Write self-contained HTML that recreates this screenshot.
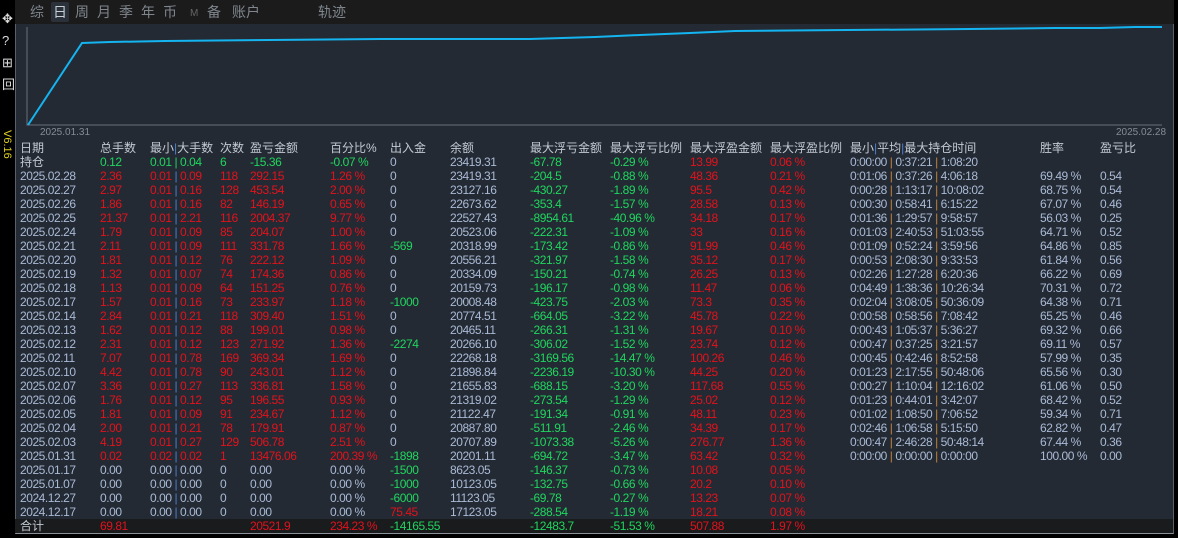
<!DOCTYPE html>
<html><head><meta charset="utf-8"><style>
*{margin:0;padding:0;box-sizing:border-box}
body{width:1178px;height:538px;background:#000;position:relative;overflow:hidden;font-family:"Liberation Sans","Noto Sans CJK SC",sans-serif;font-size:12px;color:#a9bad6}
#top{position:absolute;left:15px;top:0;width:1159px;height:24px;background:#1b1b1b}
#top span{position:absolute;top:4px;font-size:14px;color:#7f868e;line-height:16px}
#panel{position:absolute;left:15px;top:24px;width:1159px;height:510px;background:#242a33;border-left:1px solid #5a6068;border-right:1px solid #5a6068;border-bottom:1px solid #8a9098}
.row{position:absolute;left:0;height:14px;line-height:14px;white-space:nowrap;letter-spacing:-0.45px}
.row span{position:absolute;top:0}
.h{color:#c3cad4;font-size:12px;letter-spacing:0}
.r{color:#e3121c}.g{color:#1fd65f}
i{font-style:normal;color:#4a7fd0}
u{text-decoration:none;color:#c08040}
#tot{position:absolute;left:15px;top:519px;width:1158px;height:14px;background:#1a1b1d}
</style></head><body>
<div id="top">
<span style="left:15px">综</span>
<span style="left:36px;top:2px;width:18px;height:20px;background:#2a313a;border-radius:2px;color:#c8cdd3;padding:2px 2px">日</span>
<span style="left:60px">周</span><span style="left:82px">月</span><span style="left:104px">季</span><span style="left:126px">年</span><span style="left:148px">币</span><span style="left:175px;font-size:10px;top:6px;color:#666">M</span><span style="left:192px">备</span><span style="left:217px">账户</span><span style="left:303px">轨迹</span>
</div>
<div style="position:absolute;left:2px;top:8px;color:#ddd;font-size:13px;line-height:22px;width:12px">✥<br>?<br>⊞<br>回</div>
<div style="position:absolute;top:130px;color:#e0d020;font-size:11px;transform:rotate(90deg);transform-origin:left top;left:13px">V6.16</div>
<div id="panel"></div>
<svg style="position:absolute;left:0;top:0" width="1178" height="140">
<polyline points="27,27 27,125 1162,125" fill="none" stroke="#6a7078" stroke-width="1"/>
<polyline points="28,125 82,43 110,42 165,41 270,40 380,39 530,39 595,37 640,35 690,33 735,31 970,29 1055,28 1100,28 1135,27 1162,27" fill="none" stroke="#14b4f0" stroke-width="2"/>
<text x="40" y="135" fill="#858c95" font-size="10" font-family="Liberation Sans">2025.01.31</text>
<text x="1116" y="135" fill="#858c95" font-size="10" font-family="Liberation Sans">2025.02.28</text>
</svg>
<div id="tot"></div>
<div style="position:absolute;left:0;top:0">
<div class="row h" style="top:141px"><span style="left:20px">日期</span><span style="left:100px">总手数</span><span style="left:150px">最小<i>|</i>大手数</span><span style="left:220px">次数</span><span style="left:250px">盈亏金额</span><span style="left:330px">百分比%</span><span style="left:390px">出入金</span><span style="left:450px">余额</span><span style="left:530px">最大浮亏金额</span><span style="left:610px">最大浮亏比例</span><span style="left:690px">最大浮盈金额</span><span style="left:770px">最大浮盈比例</span><span style="left:850px">最小<i>|</i>平均<i>|</i>最大持仓时间</span><span style="left:1040px">胜率</span><span style="left:1100px">盈亏比</span></div>

<div class="row" style="top:155px"><span class="h" style="left:20px">持仓</span><span class="g" style="left:100px">0.12</span><span class="g" style="left:150px">0.01 | 0.04</span><span class="g" style="left:220px">6</span><span class="g" style="left:250px">-15.36</span><span class="g" style="left:330px">-0.07 %</span><span style="left:390px">0</span><span style="left:450px">23419.31</span><span class="g" style="left:530px">-67.78</span><span class="g" style="left:610px">-0.29 %</span><span class="r" style="left:690px">13.99</span><span class="r" style="left:770px">0.06 %</span><span style="left:850px">0:00:00 <u>|</u> 0:37:21 <u>|</u> 1:08:20</span></div>

<div class="row" style="top:169px"><span style="left:20px">2025.02.28</span><span class="r" style="left:100px">2.36</span><span class="r" style="left:150px">0.01 <i>|</i> 0.09</span><span class="r" style="left:220px">118</span><span class="r" style="left:250px">292.15</span><span class="r" style="left:330px">1.26 %</span><span style="left:390px">0</span><span style="left:450px">23419.31</span><span class="g" style="left:530px">-204.5</span><span class="g" style="left:610px">-0.88 %</span><span class="r" style="left:690px">48.36</span><span class="r" style="left:770px">0.21 %</span><span style="left:850px">0:01:06 <u>|</u> 0:37:26 <u>|</u> 4:06:18</span><span style="left:1040px">69.49 %</span><span style="left:1100px">0.54</span></div>

<div class="row" style="top:183px"><span style="left:20px">2025.02.27</span><span class="r" style="left:100px">2.97</span><span class="r" style="left:150px">0.01 <i>|</i> 0.16</span><span class="r" style="left:220px">128</span><span class="r" style="left:250px">453.54</span><span class="r" style="left:330px">2.00 %</span><span style="left:390px">0</span><span style="left:450px">23127.16</span><span class="g" style="left:530px">-430.27</span><span class="g" style="left:610px">-1.89 %</span><span class="r" style="left:690px">95.5</span><span class="r" style="left:770px">0.42 %</span><span style="left:850px">0:00:28 <u>|</u> 1:13:17 <u>|</u> 10:08:02</span><span style="left:1040px">68.75 %</span><span style="left:1100px">0.54</span></div>

<div class="row" style="top:197px"><span style="left:20px">2025.02.26</span><span class="r" style="left:100px">1.86</span><span class="r" style="left:150px">0.01 <i>|</i> 0.16</span><span class="r" style="left:220px">82</span><span class="r" style="left:250px">146.19</span><span class="r" style="left:330px">0.65 %</span><span style="left:390px">0</span><span style="left:450px">22673.62</span><span class="g" style="left:530px">-353.4</span><span class="g" style="left:610px">-1.57 %</span><span class="r" style="left:690px">28.58</span><span class="r" style="left:770px">0.13 %</span><span style="left:850px">0:00:30 <u>|</u> 0:58:41 <u>|</u> 6:15:22</span><span style="left:1040px">67.07 %</span><span style="left:1100px">0.46</span></div>

<div class="row" style="top:211px"><span style="left:20px">2025.02.25</span><span class="r" style="left:100px">21.37</span><span class="r" style="left:150px">0.01 <i>|</i> 2.21</span><span class="r" style="left:220px">116</span><span class="r" style="left:250px">2004.37</span><span class="r" style="left:330px">9.77 %</span><span style="left:390px">0</span><span style="left:450px">22527.43</span><span class="g" style="left:530px">-8954.61</span><span class="g" style="left:610px">-40.96 %</span><span class="r" style="left:690px">34.18</span><span class="r" style="left:770px">0.17 %</span><span style="left:850px">0:01:36 <u>|</u> 1:29:57 <u>|</u> 9:58:57</span><span style="left:1040px">56.03 %</span><span style="left:1100px">0.25</span></div>

<div class="row" style="top:225px"><span style="left:20px">2025.02.24</span><span class="r" style="left:100px">1.79</span><span class="r" style="left:150px">0.01 <i>|</i> 0.09</span><span class="r" style="left:220px">85</span><span class="r" style="left:250px">204.07</span><span class="r" style="left:330px">1.00 %</span><span style="left:390px">0</span><span style="left:450px">20523.06</span><span class="g" style="left:530px">-222.31</span><span class="g" style="left:610px">-1.09 %</span><span class="r" style="left:690px">33</span><span class="r" style="left:770px">0.16 %</span><span style="left:850px">0:01:03 <u>|</u> 2:40:53 <u>|</u> 51:03:55</span><span style="left:1040px">64.71 %</span><span style="left:1100px">0.52</span></div>

<div class="row" style="top:239px"><span style="left:20px">2025.02.21</span><span class="r" style="left:100px">2.11</span><span class="r" style="left:150px">0.01 <i>|</i> 0.09</span><span class="r" style="left:220px">111</span><span class="r" style="left:250px">331.78</span><span class="r" style="left:330px">1.66 %</span><span class="g" style="left:390px">-569</span><span style="left:450px">20318.99</span><span class="g" style="left:530px">-173.42</span><span class="g" style="left:610px">-0.86 %</span><span class="r" style="left:690px">91.99</span><span class="r" style="left:770px">0.46 %</span><span style="left:850px">0:01:09 <u>|</u> 0:52:24 <u>|</u> 3:59:56</span><span style="left:1040px">64.86 %</span><span style="left:1100px">0.85</span></div>

<div class="row" style="top:253px"><span style="left:20px">2025.02.20</span><span class="r" style="left:100px">1.81</span><span class="r" style="left:150px">0.01 <i>|</i> 0.12</span><span class="r" style="left:220px">76</span><span class="r" style="left:250px">222.12</span><span class="r" style="left:330px">1.09 %</span><span style="left:390px">0</span><span style="left:450px">20556.21</span><span class="g" style="left:530px">-321.97</span><span class="g" style="left:610px">-1.58 %</span><span class="r" style="left:690px">35.12</span><span class="r" style="left:770px">0.17 %</span><span style="left:850px">0:00:53 <u>|</u> 2:08:30 <u>|</u> 9:33:53</span><span style="left:1040px">61.84 %</span><span style="left:1100px">0.56</span></div>

<div class="row" style="top:267px"><span style="left:20px">2025.02.19</span><span class="r" style="left:100px">1.32</span><span class="r" style="left:150px">0.01 <i>|</i> 0.07</span><span class="r" style="left:220px">74</span><span class="r" style="left:250px">174.36</span><span class="r" style="left:330px">0.86 %</span><span style="left:390px">0</span><span style="left:450px">20334.09</span><span class="g" style="left:530px">-150.21</span><span class="g" style="left:610px">-0.74 %</span><span class="r" style="left:690px">26.25</span><span class="r" style="left:770px">0.13 %</span><span style="left:850px">0:02:26 <u>|</u> 1:27:28 <u>|</u> 6:20:36</span><span style="left:1040px">66.22 %</span><span style="left:1100px">0.69</span></div>

<div class="row" style="top:281px"><span style="left:20px">2025.02.18</span><span class="r" style="left:100px">1.13</span><span class="r" style="left:150px">0.01 <i>|</i> 0.09</span><span class="r" style="left:220px">64</span><span class="r" style="left:250px">151.25</span><span class="r" style="left:330px">0.76 %</span><span style="left:390px">0</span><span style="left:450px">20159.73</span><span class="g" style="left:530px">-196.17</span><span class="g" style="left:610px">-0.98 %</span><span class="r" style="left:690px">11.47</span><span class="r" style="left:770px">0.06 %</span><span style="left:850px">0:04:49 <u>|</u> 1:38:36 <u>|</u> 10:26:34</span><span style="left:1040px">70.31 %</span><span style="left:1100px">0.72</span></div>

<div class="row" style="top:295px"><span style="left:20px">2025.02.17</span><span class="r" style="left:100px">1.57</span><span class="r" style="left:150px">0.01 <i>|</i> 0.16</span><span class="r" style="left:220px">73</span><span class="r" style="left:250px">233.97</span><span class="r" style="left:330px">1.18 %</span><span class="g" style="left:390px">-1000</span><span style="left:450px">20008.48</span><span class="g" style="left:530px">-423.75</span><span class="g" style="left:610px">-2.03 %</span><span class="r" style="left:690px">73.3</span><span class="r" style="left:770px">0.35 %</span><span style="left:850px">0:02:04 <u>|</u> 3:08:05 <u>|</u> 50:36:09</span><span style="left:1040px">64.38 %</span><span style="left:1100px">0.71</span></div>

<div class="row" style="top:309px"><span style="left:20px">2025.02.14</span><span class="r" style="left:100px">2.84</span><span class="r" style="left:150px">0.01 <i>|</i> 0.21</span><span class="r" style="left:220px">118</span><span class="r" style="left:250px">309.40</span><span class="r" style="left:330px">1.51 %</span><span style="left:390px">0</span><span style="left:450px">20774.51</span><span class="g" style="left:530px">-664.05</span><span class="g" style="left:610px">-3.22 %</span><span class="r" style="left:690px">45.78</span><span class="r" style="left:770px">0.22 %</span><span style="left:850px">0:00:58 <u>|</u> 0:58:56 <u>|</u> 7:08:42</span><span style="left:1040px">65.25 %</span><span style="left:1100px">0.46</span></div>

<div class="row" style="top:323px"><span style="left:20px">2025.02.13</span><span class="r" style="left:100px">1.62</span><span class="r" style="left:150px">0.01 <i>|</i> 0.12</span><span class="r" style="left:220px">88</span><span class="r" style="left:250px">199.01</span><span class="r" style="left:330px">0.98 %</span><span style="left:390px">0</span><span style="left:450px">20465.11</span><span class="g" style="left:530px">-266.31</span><span class="g" style="left:610px">-1.31 %</span><span class="r" style="left:690px">19.67</span><span class="r" style="left:770px">0.10 %</span><span style="left:850px">0:00:43 <u>|</u> 1:05:37 <u>|</u> 5:36:27</span><span style="left:1040px">69.32 %</span><span style="left:1100px">0.66</span></div>

<div class="row" style="top:337px"><span style="left:20px">2025.02.12</span><span class="r" style="left:100px">2.31</span><span class="r" style="left:150px">0.01 <i>|</i> 0.12</span><span class="r" style="left:220px">123</span><span class="r" style="left:250px">271.92</span><span class="r" style="left:330px">1.36 %</span><span class="g" style="left:390px">-2274</span><span style="left:450px">20266.10</span><span class="g" style="left:530px">-306.02</span><span class="g" style="left:610px">-1.52 %</span><span class="r" style="left:690px">23.74</span><span class="r" style="left:770px">0.12 %</span><span style="left:850px">0:00:47 <u>|</u> 0:37:25 <u>|</u> 3:21:57</span><span style="left:1040px">69.11 %</span><span style="left:1100px">0.57</span></div>

<div class="row" style="top:351px"><span style="left:20px">2025.02.11</span><span class="r" style="left:100px">7.07</span><span class="r" style="left:150px">0.01 <i>|</i> 0.78</span><span class="r" style="left:220px">169</span><span class="r" style="left:250px">369.34</span><span class="r" style="left:330px">1.69 %</span><span style="left:390px">0</span><span style="left:450px">22268.18</span><span class="g" style="left:530px">-3169.56</span><span class="g" style="left:610px">-14.47 %</span><span class="r" style="left:690px">100.26</span><span class="r" style="left:770px">0.46 %</span><span style="left:850px">0:00:45 <u>|</u> 0:42:46 <u>|</u> 8:52:58</span><span style="left:1040px">57.99 %</span><span style="left:1100px">0.35</span></div>

<div class="row" style="top:365px"><span style="left:20px">2025.02.10</span><span class="r" style="left:100px">4.42</span><span class="r" style="left:150px">0.01 <i>|</i> 0.78</span><span class="r" style="left:220px">90</span><span class="r" style="left:250px">243.01</span><span class="r" style="left:330px">1.12 %</span><span style="left:390px">0</span><span style="left:450px">21898.84</span><span class="g" style="left:530px">-2236.19</span><span class="g" style="left:610px">-10.30 %</span><span class="r" style="left:690px">44.25</span><span class="r" style="left:770px">0.20 %</span><span style="left:850px">0:01:23 <u>|</u> 2:17:55 <u>|</u> 50:48:06</span><span style="left:1040px">65.56 %</span><span style="left:1100px">0.30</span></div>

<div class="row" style="top:379px"><span style="left:20px">2025.02.07</span><span class="r" style="left:100px">3.36</span><span class="r" style="left:150px">0.01 <i>|</i> 0.27</span><span class="r" style="left:220px">113</span><span class="r" style="left:250px">336.81</span><span class="r" style="left:330px">1.58 %</span><span style="left:390px">0</span><span style="left:450px">21655.83</span><span class="g" style="left:530px">-688.15</span><span class="g" style="left:610px">-3.20 %</span><span class="r" style="left:690px">117.68</span><span class="r" style="left:770px">0.55 %</span><span style="left:850px">0:00:27 <u>|</u> 1:10:04 <u>|</u> 12:16:02</span><span style="left:1040px">61.06 %</span><span style="left:1100px">0.50</span></div>

<div class="row" style="top:393px"><span style="left:20px">2025.02.06</span><span class="r" style="left:100px">1.76</span><span class="r" style="left:150px">0.01 <i>|</i> 0.12</span><span class="r" style="left:220px">95</span><span class="r" style="left:250px">196.55</span><span class="r" style="left:330px">0.93 %</span><span style="left:390px">0</span><span style="left:450px">21319.02</span><span class="g" style="left:530px">-273.54</span><span class="g" style="left:610px">-1.29 %</span><span class="r" style="left:690px">25.02</span><span class="r" style="left:770px">0.12 %</span><span style="left:850px">0:01:23 <u>|</u> 0:44:01 <u>|</u> 3:42:07</span><span style="left:1040px">68.42 %</span><span style="left:1100px">0.52</span></div>

<div class="row" style="top:407px"><span style="left:20px">2025.02.05</span><span class="r" style="left:100px">1.81</span><span class="r" style="left:150px">0.01 <i>|</i> 0.09</span><span class="r" style="left:220px">91</span><span class="r" style="left:250px">234.67</span><span class="r" style="left:330px">1.12 %</span><span style="left:390px">0</span><span style="left:450px">21122.47</span><span class="g" style="left:530px">-191.34</span><span class="g" style="left:610px">-0.91 %</span><span class="r" style="left:690px">48.11</span><span class="r" style="left:770px">0.23 %</span><span style="left:850px">0:01:02 <u>|</u> 1:08:50 <u>|</u> 7:06:52</span><span style="left:1040px">59.34 %</span><span style="left:1100px">0.71</span></div>

<div class="row" style="top:421px"><span style="left:20px">2025.02.04</span><span class="r" style="left:100px">2.00</span><span class="r" style="left:150px">0.01 <i>|</i> 0.21</span><span class="r" style="left:220px">78</span><span class="r" style="left:250px">179.91</span><span class="r" style="left:330px">0.87 %</span><span style="left:390px">0</span><span style="left:450px">20887.80</span><span class="g" style="left:530px">-511.91</span><span class="g" style="left:610px">-2.46 %</span><span class="r" style="left:690px">34.39</span><span class="r" style="left:770px">0.17 %</span><span style="left:850px">0:02:46 <u>|</u> 1:06:58 <u>|</u> 5:15:50</span><span style="left:1040px">62.82 %</span><span style="left:1100px">0.47</span></div>

<div class="row" style="top:435px"><span style="left:20px">2025.02.03</span><span class="r" style="left:100px">4.19</span><span class="r" style="left:150px">0.01 <i>|</i> 0.27</span><span class="r" style="left:220px">129</span><span class="r" style="left:250px">506.78</span><span class="r" style="left:330px">2.51 %</span><span style="left:390px">0</span><span style="left:450px">20707.89</span><span class="g" style="left:530px">-1073.38</span><span class="g" style="left:610px">-5.26 %</span><span class="r" style="left:690px">276.77</span><span class="r" style="left:770px">1.36 %</span><span style="left:850px">0:00:47 <u>|</u> 2:46:28 <u>|</u> 50:48:14</span><span style="left:1040px">67.44 %</span><span style="left:1100px">0.36</span></div>

<div class="row" style="top:449px"><span style="left:20px">2025.01.31</span><span class="r" style="left:100px">0.02</span><span class="r" style="left:150px">0.02 <i>|</i> 0.02</span><span class="r" style="left:220px">1</span><span class="r" style="left:250px">13476.06</span><span class="r" style="left:330px">200.39 %</span><span class="g" style="left:390px">-1898</span><span style="left:450px">20201.11</span><span class="g" style="left:530px">-694.72</span><span class="g" style="left:610px">-3.47 %</span><span class="r" style="left:690px">63.42</span><span class="r" style="left:770px">0.32 %</span><span style="left:850px">0:00:00 <u>|</u> 0:00:00 <u>|</u> 0:00:00</span><span style="left:1040px">100.00 %</span><span style="left:1100px">0.00</span></div>

<div class="row" style="top:463px"><span style="left:20px">2025.01.17</span><span style="left:100px">0.00</span><span style="left:150px">0.00 <i>|</i> 0.00</span><span style="left:220px">0</span><span style="left:250px">0.00</span><span style="left:330px">0.00 %</span><span class="g" style="left:390px">-1500</span><span style="left:450px">8623.05</span><span class="g" style="left:530px">-146.37</span><span class="g" style="left:610px">-0.73 %</span><span class="r" style="left:690px">10.08</span><span class="r" style="left:770px">0.05 %</span></div>

<div class="row" style="top:477px"><span style="left:20px">2025.01.07</span><span style="left:100px">0.00</span><span style="left:150px">0.00 <i>|</i> 0.00</span><span style="left:220px">0</span><span style="left:250px">0.00</span><span style="left:330px">0.00 %</span><span class="g" style="left:390px">-1000</span><span style="left:450px">10123.05</span><span class="g" style="left:530px">-132.75</span><span class="g" style="left:610px">-0.66 %</span><span class="r" style="left:690px">20.2</span><span class="r" style="left:770px">0.10 %</span></div>

<div class="row" style="top:491px"><span style="left:20px">2024.12.27</span><span style="left:100px">0.00</span><span style="left:150px">0.00 <i>|</i> 0.00</span><span style="left:220px">0</span><span style="left:250px">0.00</span><span style="left:330px">0.00 %</span><span class="g" style="left:390px">-6000</span><span style="left:450px">11123.05</span><span class="g" style="left:530px">-69.78</span><span class="g" style="left:610px">-0.27 %</span><span class="r" style="left:690px">13.23</span><span class="r" style="left:770px">0.07 %</span></div>

<div class="row" style="top:505px"><span style="left:20px">2024.12.17</span><span style="left:100px">0.00</span><span style="left:150px">0.00 <i>|</i> 0.00</span><span style="left:220px">0</span><span style="left:250px">0.00</span><span style="left:330px">0.00 %</span><span class="r" style="left:390px">75.45</span><span style="left:450px">17123.05</span><span class="g" style="left:530px">-288.54</span><span class="g" style="left:610px">-1.19 %</span><span class="r" style="left:690px">18.21</span><span class="r" style="left:770px">0.08 %</span></div>

<div class="row" style="top:519px"><span class="h" style="left:20px">合计</span><span class="r" style="left:100px">69.81</span><span class="r" style="left:250px">20521.9</span><span class="r" style="left:330px">234.23 %</span><span class="g" style="left:390px">-14165.55</span><span class="g" style="left:530px">-12483.7</span><span class="g" style="left:610px">-51.53 %</span><span class="r" style="left:690px">507.88</span><span class="r" style="left:770px">1.97 %</span></div>
</div>
</body></html>
